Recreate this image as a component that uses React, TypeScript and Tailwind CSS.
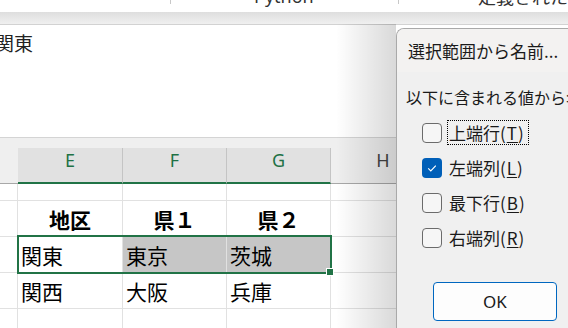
const jp = "font-['Noto_Sans_CJK_JP','Noto_Sans',sans-serif]";
const cols = "grid grid-cols-[18px_105px_104px_104px_104px_1fr]";

type Cell = { text?: string; bold?: boolean; fill?: boolean };

const ROWS: { h: string; cells: Cell[] }[] = [
  { h: "h-[17px]", cells: [{}, {}, {}, {}, {}] },
  {
    h: "h-[36px]",
    cells: [{}, { text: "地区", bold: true }, { text: "県１", bold: true }, { text: "県２", bold: true }, {}],
  },
  { h: "h-[36px]", cells: [{}, { text: "関東" }, { text: "東京", fill: true }, { text: "茨城", fill: true }, {}] },
  { h: "h-[36px]", cells: [{}, { text: "関西" }, { text: "大阪" }, { text: "兵庫" }, {}] },
  { h: "h-[36px]", cells: [{}, {}, {}, {}, {}] },
];

const OPTIONS = [
  { label: "上端行", key: "T", checked: false, focus: true },
  { label: "左端列", key: "L", checked: true, focus: false },
  { label: "最下行", key: "B", checked: false, focus: false },
  { label: "右端列", key: "R", checked: false, focus: false },
];

function Checkbox({ checked }: { checked: boolean }) {
  if (checked) {
    return (
      <span className="flex h-[20px] w-[20px] shrink-0 items-center justify-center rounded-[4px] bg-[#005fb8]">
        <svg width="20" height="20" viewBox="0 0 20 20">
          <polyline points="6.2,10.4 8.8,12.9 13.8,7.6" fill="none" stroke="white" strokeWidth="1.2" />
        </svg>
      </span>
    );
  }
  return <span className="h-[20px] w-[20px] shrink-0 rounded-[4px] border border-[#6b6b6b] bg-[#f6f6f6]" />;
}

function NameDialog() {
  return (
    <div className={`absolute left-[396px] top-[28px] bottom-0 right-[-20px] overflow-hidden rounded-tl-[8px] border-l border-t border-[#a9a9a9] bg-[#f0f0f0] ${jp}`}>
      <div className="flex h-[43px] items-center bg-[#f3f2f1] pl-[11px] text-[17px] leading-[20px] text-[#1a1a1a]">
        選択範囲から名前...
      </div>
      <div className="pt-[13px]">
        <div className="whitespace-nowrap pl-[9px] text-[16px] leading-[24px] text-[#1a1a1a]">
          以下に含まれる値から名前を作成
        </div>
        <div className="mt-[6px] flex flex-col">
          {OPTIONS.map((o) => (
            <div key={o.key} className="flex h-[35px] items-center pl-[25px]">
              <Checkbox checked={o.checked} />
              <span
                className={`ml-[5px] flex h-[25px] items-center whitespace-nowrap border pl-[1px] pr-[3px] text-[17px] leading-[20px] text-[#1a1a1a] ${
                  o.focus ? "border-dotted border-black" : "border-transparent"
                }`}
              >
                {o.label}
                <span className="tracking-[1px]">
                  (<span className="underline underline-offset-2">{o.key}</span>)
                </span>
              </span>
            </div>
          ))}
        </div>
        <div className="mt-[27px] pl-[36px]">
          <div className="flex h-[39px] w-[124px] items-center justify-center rounded-[4px] border border-[#0067c0] bg-[#fdfdfd] font-['Noto_Sans',sans-serif] text-[17px] text-[#1a1a1a]">
            OK
          </div>
        </div>
      </div>
    </div>
  );
}

export default function App() {
  return (
    <div className="relative h-[328px] w-[568px] overflow-hidden bg-white">
      {/* ribbon strip, mostly scrolled out of view */}
      <div className={`flex h-[12px] overflow-hidden text-[18px] leading-[20px] text-[#333] ${jp}`}>
        <div className="w-[170px] shrink-0" />
        <div className="h-[4px] w-px shrink-0 bg-[#c8c8c8]" />
        <div className="-mt-[14px] w-[227px] shrink-0 pl-[83px] font-['Noto_Sans',sans-serif]">Python</div>
        <div className="h-[4px] w-px shrink-0 bg-[#c8c8c8]" />
        <div className="-mt-[14px] shrink-0 whitespace-nowrap pl-[79px]">定義された名前</div>
      </div>
      <div className="h-[13px] border-b border-[#d2d2d2] bg-gradient-to-b from-[#dedede] to-[#f0f0f0]" />

      {/* formula bar */}
      <div className={`h-[113px] border-b border-[#d4d4d4] bg-white pt-[8px] ${jp}`}>
        <div className="-ml-[5px] text-[19px] leading-[19px] text-[#222]">関東</div>
      </div>

      {/* column headers */}
      <div className="h-[10px] bg-[#efefef]" />
      <div className={`${cols} h-[36px] bg-[#efefef] font-['Noto_Sans',sans-serif] text-[18px] leading-[18px]`}>
        <div className="border-b border-[#a8a8a8]" />
        {["E", "F", "G"].map((c) => (
          <div key={c} className="flex justify-center border-b-2 border-r border-b-[#217346] border-r-[#c4c4c4] bg-[#e1e1e1] pt-[3px] text-[#1e7145]">
            {c}
          </div>
        ))}
        <div className="flex justify-center border-b border-[#a8a8a8] pt-[3px] text-[#444]">H</div>
        <div className="border-b border-[#a8a8a8]" />
      </div>

      {/* cells */}
      {ROWS.map((r, i) => (
        <div key={i} className={`${cols} ${r.h} ${jp} text-[21px] leading-[24px] text-black`}>
          {r.cells.map((c, j) => (
            <div
              key={j}
              className={`flex items-center border-b border-r border-[#e1e1e1] ${c.bold ? "justify-center font-bold" : "pl-[3px]"} ${
                c.fill ? "bg-[#c6c6c6]" : ""
              }`}
            >
              {c.text}
            </div>
          ))}
          <div className="border-b border-[#e1e1e1]" />
        </div>
      ))}

      {/* selection */}
      <div className="absolute left-[17px] top-[235px] h-[39px] w-[315px] border-2 border-[#217346]" />
      <div className="absolute left-[326px] top-[268px] h-[8px] w-[8px] border border-white bg-[#217346]" />

      {/* dialog shadow */}
      <div className="absolute bottom-0 left-[336px] top-[24px] w-[60px] bg-gradient-to-r from-transparent to-black/15" />
      <NameDialog />
    </div>
  );
}
